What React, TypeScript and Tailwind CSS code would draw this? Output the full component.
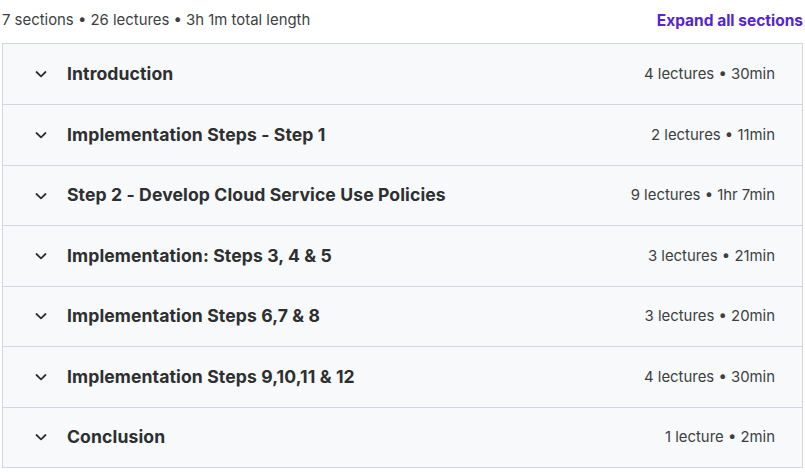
import React from "react";

const sections = [
  { title: "Introduction", meta: "4 lectures • 30min" },
  { title: "Implementation Steps - Step 1", meta: "2 lectures • 11min" },
  { title: "Step 2 - Develop Cloud Service Use Policies", meta: "9 lectures • 1hr 7min" },
  { title: "Implementation: Steps 3, 4 & 5", meta: "3 lectures • 21min" },
  { title: "Implementation Steps 6,7 & 8", meta: "3 lectures • 20min" },
  { title: "Implementation Steps 9,10,11 & 12", meta: "4 lectures • 30min" },
  { title: "Conclusion", meta: "1 lecture • 2min" },
];

function Chevron() {
  return (
    <svg width="12" height="12" viewBox="0 0 12 12" fill="none">
      <path d="M1.5 4L6 8.3L10.5 4" stroke="#2d2f31" strokeWidth="1.8" strokeLinecap="round" strokeLinejoin="round" />
    </svg>
  );
}

export default function App() {
  return (
    <div className="w-[805px] h-[472px] bg-white text-[#2d2f31]" style={{ fontFamily: "Inter, 'Noto Sans', sans-serif" }}>
      <div className="flex items-center justify-between h-[43px] pl-[2px] pr-[2px] pb-[2px]">
        <span className="text-[14.9px] text-[#3d3f41]">7 sections • 26 lectures • 3h 1m total length</span>
        <span className="text-[15.5px] font-bold text-[#5624d0]">Expand all sections</span>
      </div>
      <div className="ml-[2px] mr-[2px] border border-[#d1d7dc]">
        {sections.map((s, i) => (
          <div
            key={s.title}
            className={`flex items-center justify-between h-[60.45px] bg-[#f7f9fa] pl-[32px] pr-[27px] ${i > 0 ? "border-t border-[#d1d7dc]" : ""}`}
          >
            <div className="flex items-center gap-[20px]">
              <Chevron />
              <span className="text-[17.6px] font-bold tracking-[0.1px]">{s.title}</span>
            </div>
            <span className="text-[14.9px] text-[#3d3f41]">{s.meta}</span>
          </div>
        ))}
      </div>
    </div>
  );
}
